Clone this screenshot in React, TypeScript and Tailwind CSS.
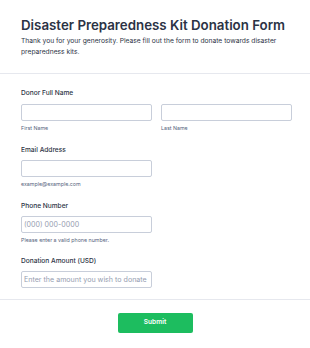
import React from "react"

const inputCls =
  "block h-[17px] w-[131px] rounded-[2px] border border-[#c8ceda] bg-white px-[2px] text-[7.1px] text-[#2c3345] placeholder:text-[#959db0] outline-none"

function Label({ children }: { children: React.ReactNode }) {
  return <div className="text-[6.6px] font-medium leading-[11px] text-[#2c3345]">{children}</div>
}

function Hint({ children }: { children: React.ReactNode }) {
  return <div className="mt-[3px] text-[5.3px] leading-[8px] text-[#57647e]">{children}</div>
}

export default function App() {
  return (
    <div className="min-h-screen w-[310px] bg-white font-['Inter',sans-serif]">
      {/* Header */}
      <div className="border-b border-[#e6e8ee] px-[21px] pt-[17px] pb-[15px]">
        <h1 className="text-[13.3px] font-semibold leading-[16px] text-[#2c3345]">
          Disaster Preparedness Kit Donation Form
        </h1>
        <p className="mt-[3px] text-[6.7px] leading-[11px] text-[#2c3345]">
          Thank you for your generosity. Please fill out the form to donate towards disaster preparedness kits.
        </p>
      </div>

      {/* Fields */}
      <div className="px-[21px] pt-[14px] pb-[11px]">
        <Label>Donor Full Name</Label>
        <div className="mt-[5px] flex gap-[9px]">
          <div>
            <input className={inputCls} />
            <Hint>First Name</Hint>
          </div>
          <div>
            <input className={inputCls} />
            <Hint>Last Name</Hint>
          </div>
        </div>

        <div className="mt-[13px]">
          <Label>Email Address</Label>
          <input className={`${inputCls} mt-[4px]`} />
          <Hint>example@example.com</Hint>
        </div>

        <div className="mt-[13px]">
          <Label>Phone Number</Label>
          <input className={`${inputCls} mt-[4px]`} placeholder="(000) 000-0000" />
          <Hint>Please enter a valid phone number.</Hint>
        </div>

        <div className="mt-[12px]">
          <Label>Donation Amount (USD)</Label>
          <input className={`${inputCls} mt-[4px]`} placeholder="Enter the amount you wish to donate" />
        </div>
      </div>

      {/* Submit */}
      <div className="flex justify-center border-t border-[#e6e8ee] pt-[13px]">
        <button className="h-[20px] w-[75px] rounded-[2px] bg-[#1dbd5f] text-[6.6px] font-semibold text-white">
          Submit
        </button>
      </div>
    </div>
  )
}
